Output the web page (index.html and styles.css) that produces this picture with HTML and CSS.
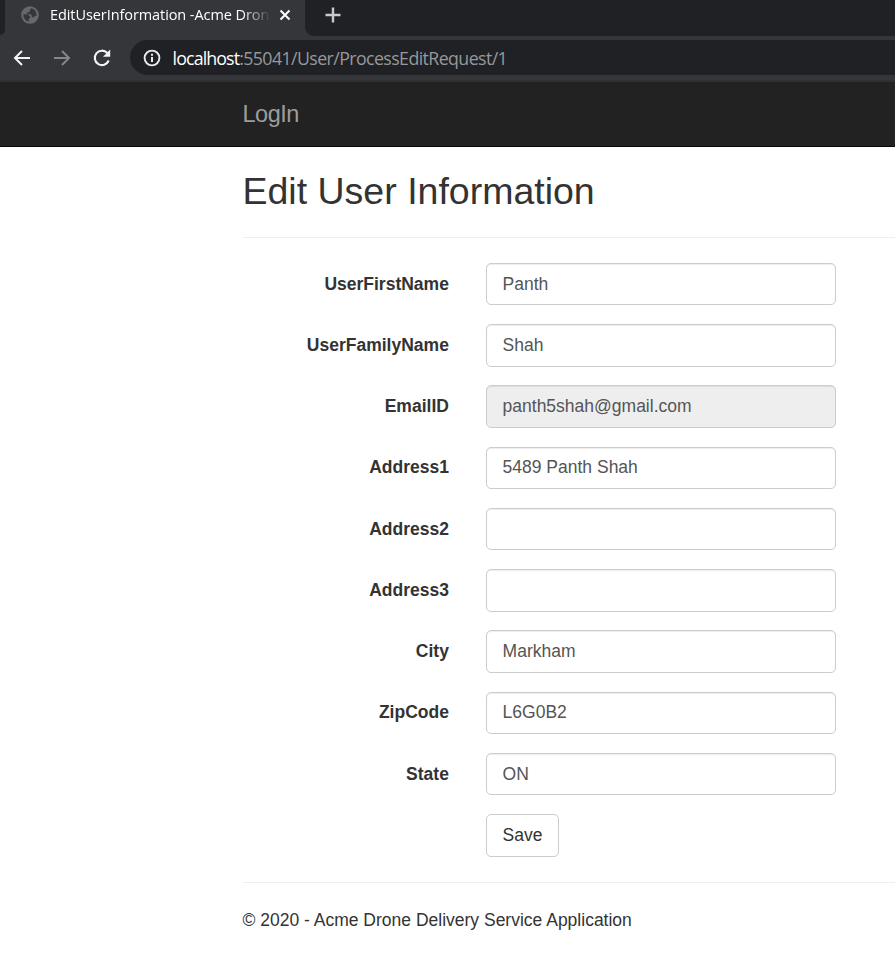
FILE: index.html
```html
<!DOCTYPE html>
<html lang="en">
<head>
<meta charset="utf-8">
<title>EditUserInformation - Acme Drone</title>
<link rel="stylesheet" href="styles.css">
</head>
<body>
<div class="browser">
  <div class="tabs">
    <div class="prev-tab"></div>
    <div class="tab">
      <svg class="globe" width="18" height="18" viewBox="0 0 18 18"><circle cx="9" cy="9" r="8.8" fill="#67686c"/><path d="M10.3 2.2 9 3.5v1.7L7.3 6.4 6 6.6v1.7h3.8l1 1.2v1.7h1.8l1.2-1.3 1.6.2A6.7 6.7 0 0 0 10.3 2.2ZM2.4 8.3l4.5.2 2.2 2v1.6l-1.3.8v2.6A6.7 6.7 0 0 1 2.4 8.3Z" fill="#35363a"/></svg>
      <span class="tab-title">EditUserInformation -Acme Dron</span>
      <svg class="close" width="12" height="12" viewBox="0 0 12 12"><path d="m1.5 1.5 9 9m0-9-9 9" stroke="#fff" stroke-width="2"/></svg>
    </div>
    <div class="strip"><svg width="16" height="16" viewBox="0 0 16 16"><path d="M8 .5v15M.5 8h15" stroke="#c8cacd" stroke-width="2.4"/></svg></div>
  </div>
  <div class="toolbar">
    <svg class="nav" width="20" height="20" viewBox="0 0 20 20"><path d="M18 10H3m7-7-7 7 7 7" fill="none" stroke="#f1f3f4" stroke-width="2"/></svg>
    <svg class="nav" width="20" height="20" viewBox="0 0 20 20"><path d="M2 10h15m-7-7 7 7-7 7" fill="none" stroke="#85868a" stroke-width="2"/></svg>
    <svg class="nav" width="20" height="20" viewBox="0 0 20 20"><path d="M16.7 12.5A7.2 7.2 0 1 1 15.3 5" fill="none" stroke="#f1f3f4" stroke-width="2.1"/><path d="M18.2 1.6v7.2H11z" fill="#f1f3f4"/></svg>
    <div class="address">
      <svg width="18" height="18" viewBox="0 0 18 18"><circle cx="9" cy="9" r="7.4" fill="none" stroke="#e8eaed" stroke-width="1.9"/><path d="M9 8v5M9 4.8v2" stroke="#e8eaed" stroke-width="2"/></svg>
      <span class="host">localhost</span><span class="path">:55041/User/ProcessEditRequest/1</span>
    </div>
  </div>
</div>
<nav class="navbar"><a class="brand">LogIn</a></nav>
<main class="container">
  <h2>Edit User Information</h2>
  <hr>
  <form class="form">
    <label for="first">UserFirstName</label><input id="first" value="Panth">
    <label for="family">UserFamilyName</label><input id="family" value="Shah">
    <label for="email">EmailID</label><input id="email" value="panth5shah@gmail.com" readonly>
    <label for="a1">Address1</label><input id="a1" value="5489 Panth Shah">
    <label for="a2">Address2</label><input id="a2">
    <label for="a3">Address3</label><input id="a3">
    <label for="city">City</label><input id="city" value="Markham">
    <label for="zip">ZipCode</label><input id="zip" value="L6G0B2">
    <label for="state">State</label><input id="state" value="ON">
    <button class="save" type="button">Save</button>
  </form>
  <hr class="end">
  <footer>© 2020 - Acme Drone Delivery Service Application</footer>
</main>
</body>
</html>
```
FILE: styles.css
```css
* { box-sizing: border-box; }
body {
  margin: 0;
  background: #fff;
  color: #333;
  font: 17.5px/25px "Liberation Sans", Arial, sans-serif;
  overflow: hidden;
}
svg { display: block; flex: none; }
.browser { background: #35363a; font-family: "Open Sans", "Noto Sans", sans-serif; }
.tabs { display: flex; height: 36px; }
.prev-tab { width: 5px; height: 35px; background: #202124; border-bottom-right-radius: 5px; }
.tab { display: flex; width: 300px; padding: 0 0 6px 16px; align-items: center; }
.tab-title {
  width: 221px;
  margin-left: 11px;
  white-space: nowrap;
  color: #fff;
  font-size: 14.5px;
  letter-spacing: -0.08px;
  line-height: 20px;
  -webkit-mask-image: linear-gradient(90deg, #000 192px, transparent 221px);
  mask-image: linear-gradient(90deg, #000 192px, transparent 221px);
}
.close { margin-left: 8px; }
.strip { flex: 1; padding: 7px 0 0 19.5px; background: #202124; border-bottom-left-radius: 9px; }
.toolbar { display: flex; height: 46px; padding: 5px 0 6px 12.3px; align-items: center; border-bottom: 2px solid #2f3032; }
.nav { margin-right: 20px; }
.address {
  display: flex;
  flex: 1;
  height: 35px;
  margin-left: -2.3px;
  padding-left: 13.4px;
  align-items: center;
  border-radius: 18px 0 0 18px;
  background: #202124;
  font-size: 17.8px;
  white-space: nowrap;
}
.host, .path { padding-top: 2px; }
.host { margin-left: 11.2px; color: #fff; letter-spacing: -0.88px; }
.path { color: #96989b; letter-spacing: -0.6px; }
.navbar { height: 65px; padding: 20px 0 0 242.5px; background: #222; border-bottom: 1px solid #080808; }
.brand { color: #9d9d9d; font-size: 23.5px; letter-spacing: -0.5px; }
.container { padding-left: 242.5px; }
h2 { margin: 23px 0 0; font-size: 37.5px; font-weight: 400; line-height: 42px; }
hr { height: 1px; margin: 25px 0; border: 0; background: #eee; }
.form { display: grid; grid-template-columns: 206.4px 350px; grid-auto-rows: 42.5px; column-gap: 37.1px; row-gap: 18.75px; margin-top: -0.15px; }
label { padding-top: 8.75px; text-align: right; font-weight: 700; }
input {
  width: 100%;
  height: 100%;
  padding: 7px 15.6px;
  border: 1px solid #ccc;
  border-radius: 5px;
  box-shadow: inset 0 1px 1px rgba(0, 0, 0, .075);
  background: #fff;
  color: #555;
  font: inherit;
}
input[readonly] { background: #eee; }
.save { grid-column: 2; width: 73px; padding: 0; border: 1px solid #ccc; border-radius: 5px; background: #fff; color: #333; font: inherit; }
.end { margin-top: 25.15px; }
```
